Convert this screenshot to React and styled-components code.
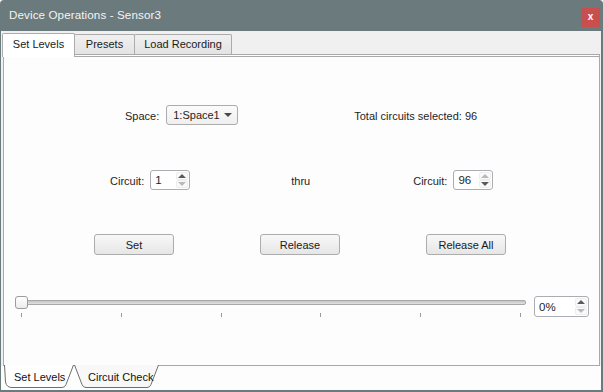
import React from 'react'
import styled, { createGlobalStyle } from 'styled-components'

const GlobalStyle = createGlobalStyle`
  html, body {
    margin: 0;
    padding: 0;
    background: #ffffff;
  }
  body {
    font-family: "Liberation Sans", Arial, sans-serif;
    font-size: 11px;
    color: #1e1e1e;
  }
  * {
    box-sizing: border-box;
  }
`

const Window = styled.div`
  width: 603px;
  height: 392px;
  display: flex;
  flex-direction: column;
  overflow: hidden;
  border-radius: 4px 4px 0 0;
`

const TitleBar = styled.div`
  height: 31px;
  flex: none;
  display: flex;
  align-items: flex-start;
  justify-content: space-between;
  background: #6b7a7c;
  padding-left: 9px;
  padding-right: 3px;
`

const Title = styled.span`
  margin-top: 8px;
  font-size: 11.6px;
  color: #f4f4f4;
  letter-spacing: 0.01em;
`

const CloseButton = styled.div`
  margin-top: 8px;
  width: 19px;
  height: 19px;
  background: #c94f4f;
  color: #ffffff;
  font-weight: 700;
  font-size: 10px;
  display: flex;
  align-items: center;
  justify-content: center;
  padding-bottom: 2px;
`

const Body = styled.div`
  flex: 1;
  display: flex;
  flex-direction: column;
  background: #f0f0f0;
  border-left: 1px solid #6b7a7c;
  border-right: 2px solid #6b7a7c;
  border-bottom: 2px solid #6b7a7c;
`

const TopTabs = styled.div`
  height: 23px;
  flex: none;
  display: flex;
  align-items: flex-end;
  padding-left: 1px;
  position: relative;
  z-index: 1;
`

const TopTab = styled.div`
  height: ${p => (p.$active ? '24px' : '20px')};
  margin-bottom: ${p => (p.$active ? '-3px' : '0')};
  width: ${p => p.$w}px;
  margin-left: ${p => (p.$first ? '0' : '-1px')};
  border: 1px solid #acacac;
  border-bottom: none;
  border-radius: 2px 2px 0 0;
  background: ${p => (p.$active ? '#ffffff' : 'linear-gradient(#f0f0f0, #e3e3e3)')};
  display: flex;
  align-items: center;
  justify-content: center;
  padding-bottom: ${p => (p.$active ? '3px' : '1px')};
  color: #1a1a1a;
`

const Pane = styled.div`
  flex: 1;
  margin-left: 2px;
  margin-right: 1px;
  background: #fdfdfd;
  border: 1px solid #a9a9a9;
  border-top: 3px double #a9a9a9;
  padding-top: 48px;
  display: flex;
  flex-direction: column;
`

const Row = styled.div`
  display: flex;
  align-items: center;
  height: ${p => p.$h || 20}px;
  margin-top: ${p => p.$mt || 0}px;
  padding-left: ${p => p.$pl || 0}px;
`

const Label = styled.span`
  margin-left: ${p => p.$ml || 0}px;
  margin-right: ${p => p.$mr || 0}px;
  padding-top: 1px;
  white-space: nowrap;
`

const Combo = styled.div`
  width: 72px;
  height: 20px;
  border: 1px solid #acacac;
  border-radius: 3px;
  background: linear-gradient(#fbfbfb, #efefef);
  display: flex;
  align-items: center;
  justify-content: space-between;
  padding: 0 5px 0 6px;
`

const DownCaret = styled.span`
  width: 0;
  height: 0;
  border-left: 4px solid transparent;
  border-right: 4px solid transparent;
  border-top: 4px solid #4a4a4a;
`

const Spin = styled.div`
  width: ${p => p.$w}px;
  height: ${p => p.$h || 20}px;
  margin-left: ${p => p.$ml || 0}px;
  border: 1px solid #abadb3;
  border-radius: 3px;
  background: #ffffff;
  display: flex;
`

const SpinValue = styled.span`
  flex: 1;
  display: flex;
  align-items: center;
  padding-left: 4px;
  font-size: 11.5px;
`

const SpinArrows = styled.div`
  width: 13px;
  display: flex;
  flex-direction: column;
  padding: 1px 1px 1px 0;
`

const SpinHalf = styled.div`
  flex: 1;
  display: flex;
  align-items: center;
  justify-content: center;
  border: 1px solid #ededed;
  border-radius: 2px;
  background: #fafafa;

  &::after {
    content: '';
    width: 0;
    height: 0;
    border-left: 4px solid transparent;
    border-right: 4px solid transparent;
    ${p =>
      p.$up
        ? `border-bottom: 4px solid ${p.$off ? '#b9b9b9' : '#5a5a5a'};`
        : `border-top: 4px solid ${p.$off ? '#b9b9b9' : '#5a5a5a'};`}
  }
`

const Button = styled.div`
  width: 80px;
  height: 21px;
  margin-left: ${p => p.$ml || 0}px;
  border: 1px solid #acacac;
  border-radius: 3px;
  background: linear-gradient(#f8f8f8, #e6e6e6);
  display: flex;
  align-items: center;
  justify-content: center;
  color: #1a1a1a;
`

const SliderRow = styled.div`
  display: flex;
  align-items: flex-start;
  margin-top: 41px;
  padding-left: 11px;
`

const Slider = styled.div`
  width: 511px;
  height: 22px;
  position: relative;
`

const Groove = styled.div`
  position: absolute;
  left: 0;
  right: 0;
  top: 4px;
  height: 5px;
  border-radius: 2px;
  border: 1px solid #a8a8a8;
  background: linear-gradient(#c4c4c4, #e2e2e2);
`

const Handle = styled.div`
  position: absolute;
  left: 0;
  top: 0;
  width: 13px;
  height: 13px;
  border: 1px solid #9c9c9c;
  border-radius: 3px;
  background: linear-gradient(#ffffff, #ececec);
`

const Ticks = styled.div`
  position: absolute;
  left: 6px;
  right: 5px;
  top: 17px;
  display: flex;
  justify-content: space-between;
`

const Tick = styled.span`
  width: 1px;
  height: 4px;
  background: #9a9a9a;
`

const BottomStrip = styled.div`
  height: 24px;
  flex: none;
  background: #fdfdfd;
  padding-left: 2px;
  display: flex;
`

const BottomTab = styled.div`
  position: relative;
  width: ${p => p.$w}px;
  height: 23px;
  margin-left: ${p => p.$ml || 0}px;
  z-index: ${p => (p.$active ? 2 : 1)};
  margin-top: -1px;

  svg {
    position: absolute;
    left: 0;
    top: 0;
  }
`

const BottomLabel = styled.span`
  position: relative;
  display: block;
  padding-left: ${p => p.$pl}px;
  padding-top: 6px;
  font-size: 11px;
  color: #111;
`

const SpinBox = ({ value, w, h, ml, upOff, downOff }) => (
  <Spin $w={w} $h={h} $ml={ml}>
    <SpinValue>{value}</SpinValue>
    <SpinArrows>
      <SpinHalf $up $off={upOff} />
      <SpinHalf $off={downOff} />
    </SpinArrows>
  </Spin>
)

const App = () => {
  const ticks = [0, 1, 2, 3, 4, 5]
  return (
    <>
      <GlobalStyle />
      <Window>
        <TitleBar>
          <Title>Device Operations - Sensor3</Title>
          <CloseButton>x</CloseButton>
        </TitleBar>
        <Body>
          <TopTabs>
            <TopTab $active $first $w={73}>Set Levels</TopTab>
            <TopTab $w={61}>Presets</TopTab>
            <TopTab $w={98}>Load Recording</TopTab>
          </TopTabs>
          <Pane>
            <Row $pl={121}>
              <Label $mr={7}>Space:</Label>
              <Combo>
                <span>1:Space1</span>
                <DownCaret />
              </Combo>
              <Label $ml={116}>Total circuits selected: 96</Label>
            </Row>
            <Row $mt={45} $pl={106}>
              <Label $mr={6}>Circuit:</Label>
              <SpinBox value="1" w={40} upOff={false} downOff />
              <Label $ml={101}>thru</Label>
              <Label $ml={103} $mr={6}>Circuit:</Label>
              <SpinBox value="96" w={40} upOff downOff={false} />
            </Row>
            <Row $mt={44} $h={21} $pl={90}>
              <Button>Set</Button>
              <Button $ml={86}>Release</Button>
              <Button $ml={86}>Release All</Button>
            </Row>
            <SliderRow>
              <Slider>
                <Groove />
                <Handle />
                <Ticks>
                  {ticks.map(t => (
                    <Tick key={t} />
                  ))}
                </Ticks>
              </Slider>
              <SpinBox value="0%" w={55} h={21} ml={8} upOff={false} downOff />
            </SliderRow>
          </Pane>
          <BottomStrip>
            <BottomTab $active $w={72}>
              <svg width="72" height="24" viewBox="0 0 72 24">
                <path
                  d="M1.5 0 L2.5 17 Q3.5 22.5 9 22.5 L59 22.5 Q62 22.5 63 19.5 L70.5 0"
                  fill="#ffffff"
                  stroke="#6e6e6e"
                  strokeWidth="1"
                />
              </svg>
              <BottomLabel $pl={11}>Set Levels</BottomLabel>
            </BottomTab>
            <BottomTab $w={88} $ml={-2}>
              <svg width="88" height="24" viewBox="0 0 88 24">
                <path
                  d="M1.5 0 L9 19.5 Q10 22.5 13 22.5 L74 22.5 Q77 22.5 78 19.5 L85.5 0"
                  fill="#f8f8f8"
                  stroke="#6e6e6e"
                  strokeWidth="1"
                />
              </svg>
              <BottomLabel $pl={15}>Circuit Check</BottomLabel>
            </BottomTab>
          </BottomStrip>
        </Body>
      </Window>
    </>
  )
}

export default App
